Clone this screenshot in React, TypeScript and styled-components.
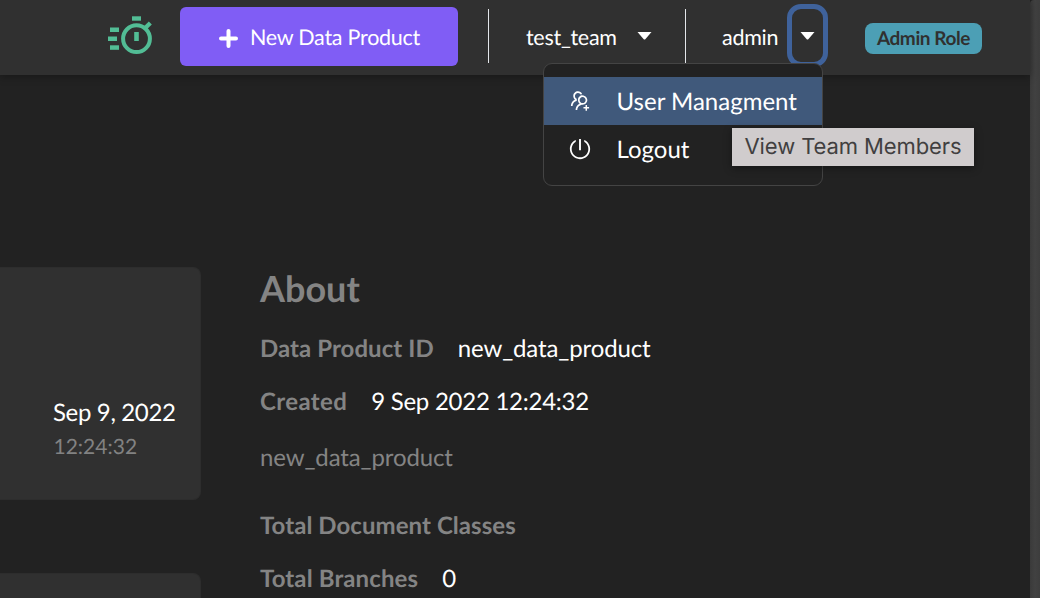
import React from "react";
import styled, { createGlobalStyle } from "styled-components";
import { AiOutlinePoweroff, AiOutlineUsergroupAdd } from "react-icons/ai";

const GlobalStyle = createGlobalStyle`
  * { box-sizing: border-box; }
  body {
    margin: 0;
    background: #222222;
    font-family: Lato, "Open Sans", sans-serif;
    text-rendering: geometricPrecision;
    overflow: hidden;
  }
`;

const Window = styled.div`
  display: flex;
  width: 1040px;
  height: 598px;
  overflow: hidden;
  background: #222222;
`;

const Page = styled.div`
  width: 1030px;
  display: flex;
  flex-direction: column;
`;

const ScrollTrack = styled.div`
  width: 10px;
  background: linear-gradient(90deg, #3a3a3a, #414141 50%, #3d3d3d);
  border-top-left-radius: 4px;
`;

const Header = styled.header`
  position: relative;
  z-index: 1;
  flex: none;
  display: flex;
  align-items: flex-start;
  height: 75px;
  padding-left: 107px;
  background: #303030;
  box-shadow: 0 2px 8px rgba(0, 0, 0, 0.3);
`;

const Logo = styled.svg`
  width: 46px;
  height: 40px;
  margin: 15px 27px 0 0;
`;

const NewButton = styled.button`
  display: flex;
  align-items: center;
  width: 278px;
  height: 59px;
  margin: 7px 30px 0 0;
  padding: 0 0 0 38px;
  gap: 11px;
  border: 0;
  border-radius: 6px;
  background: #805df5;
  color: #fff;
  font: 400 21.5px/30px Lato, sans-serif;
  letter-spacing: -0.25px;
  text-rendering: geometricPrecision;
  white-space: nowrap;

  svg { margin-top: 4px; }
`;

const Section = styled.div<{ $width: number; $indent: number }>`
  display: flex;
  align-items: center;
  width: ${(p) => p.$width}px;
  height: 54px;
  margin-top: 9px;
  padding-left: ${(p) => p.$indent}px;
  border-left: 1px solid #e3e6ea;
`;

const Name = styled.span<{ $width: number }>`
  width: ${(p) => p.$width}px;
  padding-top: 2px;
  color: #fff;
  font-size: 21.5px;
  letter-spacing: -0.28px;
  line-height: 30px;
  white-space: nowrap;
`;

const Caret = styled.svg`
  flex: none;
  display: block;
  width: 15px;
  height: 8px;
`;

const FocusButton = styled.button`
  flex: none;
  display: flex;
  justify-content: center;
  width: 41px;
  height: 63px;
  margin: 4px 0 0 -0.5px;
  padding: 23px 0 0;
  border: 5px solid #3f629b;
  border-radius: 14px;
  background: transparent;
`;

const Badge = styled.span`
  width: 117px;
  height: 31px;
  margin: 23px 0 0 37.5px;
  border-radius: 8px;
  background: #4c9fb5;
  color: #303030;
  font-size: 19px;
  font-weight: 700;
  letter-spacing: -0.4px;
  line-height: 32px;
  text-align: center;
  white-space: nowrap;
`;

const Menu = styled.div`
  position: absolute;
  top: 63px;
  left: 543px;
  width: 280px;
  height: 123px;
  padding: 13px 0;
  border: 1px solid #444444;
  border-radius: 9px;
  background: #222222;
`;

const MenuItem = styled.div<{ $active?: boolean }>`
  display: flex;
  align-items: center;
  gap: 24.5px;
  height: 48px;
  padding-left: 24px;
  background: ${(p) => (p.$active ? "#40597b" : "transparent")};
  color: #fff;
  font-size: 24px;
  line-height: 48px;
  white-space: nowrap;

  span { padding-top: 2px; }
`;

const Tooltip = styled.div`
  position: absolute;
  top: 128px;
  left: 732px;
  width: 242px;
  height: 38px;
  background: #d0cccd;
  box-shadow: 0 2px 8px rgba(0, 0, 0, 0.4);
  color: #413f40;
  font: 400 22px/38px Inter, sans-serif;
  letter-spacing: -0.1px;
  text-align: center;
  white-space: nowrap;
`;

const Main = styled.main`
  flex: 1;
  display: flex;
  min-height: 0;
  padding-top: 192px;
`;

const Cards = styled.div`
  display: flex;
  flex-direction: column;
  gap: 73px;
  width: 201px;
`;

const Card = styled.section`
  flex: none;
  height: 233px;
  padding: 128px 0 0 53px;
  border: 1px solid #2d2d2d;
  border-left: 0;
  border-radius: 0 8px 8px 0;
  background: #303030;
  white-space: nowrap;
`;

const CardDate = styled.div`
  color: #fff;
  font-size: 24px;
  letter-spacing: -0.35px;
  line-height: 34px;
`;

const CardTime = styled.div`
  padding-left: 0.5px;
  color: #828282;
  font-size: 21px;
  line-height: 34px;
`;

const About = styled.section`
  padding-left: 59px;
  white-space: nowrap;
`;

const Title = styled.h2`
  margin: 0;
  color: #848484;
  font-size: 36px;
  font-weight: 700;
  line-height: 43px;
`;

const Row = styled.div<{ $gap: number }>`
  display: flex;
  gap: 24px;
  height: 30px;
  margin-top: ${(p) => p.$gap}px;
  font-size: 24px;
  line-height: 30px;
`;

const Label = styled.span<{ $tracking?: number }>`
  color: #848484;
  font-weight: 700;
  letter-spacing: ${(p) => p.$tracking ?? 0.06}px;
`;

const Value = styled.span<{ $muted?: boolean; $tracking?: number }>`
  color: ${(p) => (p.$muted ? "#848484" : "#fff")};
  letter-spacing: ${(p) => p.$tracking ?? -0.12}px;
`;

const DownCaret = () => (
  <Caret viewBox="0 0 15 8">
    <path d="M0.5 0H14.5L8.3 7.2Q7.5 8 6.7 7.2Z" fill="#fff" />
  </Caret>
);

export default function App() {
  return (
    <Window>
      <GlobalStyle />
      <Page>
        <Header>
          <Logo viewBox="0 0 46 40" fill="#52bd95">
            <circle cx="29.5" cy="23.7" r="13.4" fill="none" stroke="#52bd95" strokeWidth="4" />
            <rect x="25" y="1.3" width="9" height="4.4" />
            <rect x="27.2" y="17" width="4.6" height="9" />
            <path d="M36.5 11.8L41.8 6.5L44.8 9.5L39.5 14.8Z" />
            <rect x="3" y="12.5" width="9" height="4.5" />
            <rect x="1" y="21.5" width="9" height="4.5" />
            <rect x="3" y="30.3" width="9" height="4.5" />
          </Logo>
          <NewButton>
            <svg width="21" height="19" viewBox="0 0 21 19" stroke="#fff" strokeWidth="4" strokeLinecap="round">
              <path d="M10.5 2V17M3 9.5H18" />
            </svg>
            New Data Product
          </NewButton>
          <Section $width={197} $indent={37}>
            <Name $width={111}>test_team</Name>
            <DownCaret />
          </Section>
          <Section $width={102} $indent={36}>
            <Name $width={60}>admin</Name>
          </Section>
          <FocusButton>
            <DownCaret />
          </FocusButton>
          <Badge>Admin Role</Badge>
          <Menu>
            <MenuItem $active>
              <AiOutlineUsergroupAdd size={24} />
              <span>User Managment</span>
            </MenuItem>
            <MenuItem>
              <AiOutlinePoweroff size={24} />
              <span>Logout</span>
            </MenuItem>
          </Menu>
          <Tooltip>View Team Members</Tooltip>
        </Header>
        <Main>
          <Cards>
            <Card>
              <CardDate>Sep 9, 2022</CardDate>
              <CardTime>12:24:32</CardTime>
            </Card>
            <Card />
          </Cards>
          <About>
            <Title>About</Title>
            <Row $gap={24}>
              <Label>Data Product ID</Label>
              <Value>new_data_product</Value>
            </Row>
            <Row $gap={23}>
              <Label $tracking={0.38}>Created</Label>
              <Value $tracking={-0.26}>9 Sep 2022 12:24:32</Value>
            </Row>
            <Row $gap={26}>
              <Value $muted>new_data_product</Value>
            </Row>
            <Row $gap={38}>
              <Label>Total Document Classes</Label>
            </Row>
            <Row $gap={23}>
              <Label $tracking={0.12}>Total Branches</Label>
              <Value>0</Value>
            </Row>
          </About>
        </Main>
      </Page>
      <ScrollTrack />
    </Window>
  );
}
